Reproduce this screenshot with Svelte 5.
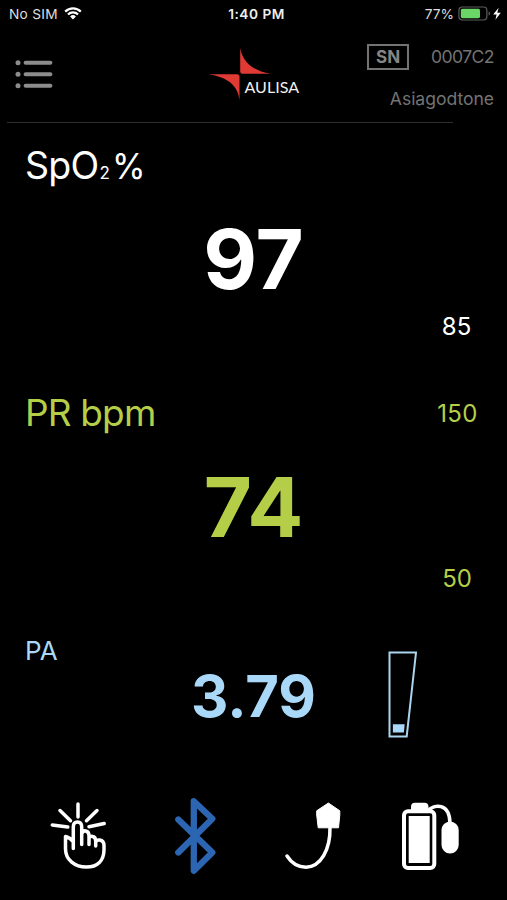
<script>
    let device = { serial: '0007C2', name: 'Asiagodtone' }
    let spo2 = { value: 97, low: 85 }
    let pulse = { value: 74, high: 150, low: 50 }
    let pa = '3.79'
</script>

<main class="monitor">
    <div class="status-bar">
        <div class="carrier">
            <span class="carrier-name">No SIM</span>
            <svg class="wifi" viewBox="0 0 18 13" width="18" height="13">
                <path d="M1.2 4.6a11 11 0 0 1 15.6 0M4 7.4a7 7 0 0 1 10 0" fill="none" stroke="#fff" stroke-width="2.2" />
                <path d="M9 12.4 6.1 9.5a4.1 4.1 0 0 1 5.8 0z" fill="#fff" />
            </svg>
        </div>
        <span class="clock">1:40 PM</span>
        <div class="power">
            <span class="power-level">77%</span>
            <svg viewBox="0 0 44 16" width="44" height="16">
                <rect x="0.9" y="1" width="28" height="13" rx="3.4" fill="none" stroke="#5c5c5c" stroke-width="1.2" />
                <rect x="2.8" y="2.8" width="19.2" height="9.4" rx="1.6" fill="#6bd668" />
                <path d="M30.6 5.3q1.5.8 1.5 2.2t-1.5 2.2z" fill="#5c5c5c" />
                <path d="M40.6 1.8 35.2 8.6h3.4l-1.2 5.2 5.4-7h-3.5z" fill="#fff" />
            </svg>
        </div>
    </div>

    <header class="header">
        <button class="menu" aria-label="Menu">
            <svg viewBox="0 0 38 30" width="38" height="30">
                <g fill="#8c8c8c">
                    <circle cx="3" cy="3.8" r="2.5" />
                    <circle cx="3" cy="15.3" r="2.5" />
                    <circle cx="3" cy="26.8" r="2.5" />
                </g>
                <path d="M10.6 3.8h24.8M10.6 15.3h24.8M10.6 26.8h24.8" stroke="#8c8c8c" stroke-width="4" stroke-linecap="round" />
            </svg>
        </button>
        <svg class="logo" viewBox="0 0 92 54" width="92" height="54">
            <path d="M31.2 1C33 12.500 41.500 23.500 61.500 26.800H33.400q-2.200 0-2.200-2.200z" fill="#e03a34" />
            <path d="M-1 27.300H28q2.500 0 2.500 2.500V53C29 39 19 30 -1 27.300z" fill="#e03a34" />
            <text x="35.500" y="46.300" textLength="54.500" lengthAdjust="spacingAndGlyphs">AULISA</text>
        </svg>
        <div class="device">
            <div class="device-row">
                <span class="sn">SN</span>
                <span class="serial">{device.serial}</span>
            </div>
            <span class="device-name">{device.name}</span>
        </div>
    </header>

    <section class="reading">
        <div class="reading-head">
            <h2 class="spo2-label">SpO<small>2</small><span>%</span></h2>
        </div>
        <div class="value">{spo2.value}</div>
        <div class="limit">{spo2.low}</div>
    </section>

    <section class="reading pulse">
        <div class="reading-head">
            <h2 class="pulse-label">PR bpm</h2>
            <div class="limit limit-high">{pulse.high}</div>
        </div>
        <div class="value">{pulse.value}</div>
        <div class="limit">{pulse.low}</div>
    </section>

    <section class="pa">
        <h2>PA</h2>
        <div class="pa-value">{pa}</div>
        <svg class="gauge" viewBox="0 0 30 88" width="30" height="88">
            <path d="M1.500 1.600H28L18.700 85.400H1.500z" fill="none" stroke="#a9d5ef" stroke-width="2" />
            <path d="M4.900 73.300H16.700L15.900 81.600H4.900z" fill="#a9d8f8" />
        </svg>
    </section>

    <footer class="toolbar">
        <svg viewBox="0 0 90 90" width="90" height="90">
            <g fill="none" stroke="#fff" stroke-width="3.500" stroke-linecap="round" stroke-linejoin="round">
                <path d="M38 14v13M20 20.500l10.500 10.200M12.300 35l15.500 2M46.500 30.700 57 20.500M49 36.700 64.200 33.500" />
                <path d="M33.300 58.500V37q0-5 4.200-5t4.200 5v17.500M41.700 44q1-3.700 4-3 3.300.7 3.300 4.800v8.700M49 48q1.300-2.300 3.800-1.500 2.900.8 2.900 4.500v5M55.700 52q1.200-2.500 4-2 4.300.8 4.300 5.500v4c0 11-6.500 17.600-17.700 17.600S25.500 70 25.500 59V46.500q5.200 1.500 7.500 5" />
            </g>
        </svg>
        <svg viewBox="0 0 70 90" width="70" height="90">
            <path d="M18.300 29.500 52.300 62.500 33.800 80.800V11.200L52.300 28.700 18.300 62.500" fill="none" stroke="#2c65b1" stroke-width="6.300" stroke-linecap="round" stroke-linejoin="round" />
        </svg>
        <svg viewBox="0 0 80 90" width="80" height="90">
            <path d="M53.400 13 64.800 20.800V25L63.500 37.800H43.200L41.700 25V20.800z" fill="#fff" stroke="#fff" stroke-width="1" stroke-linejoin="round" />
            <path d="M55 37C55.500 60 45.500 77.200 31 77.200 23.500 77.200 16.500 73 12 66" fill="none" stroke="#fff" stroke-width="3.500" stroke-linecap="round" />
        </svg>
        <svg viewBox="0 0 80 90" width="80" height="90">
            <rect x="21" y="12.700" width="17.500" height="12" rx="4" fill="#fff" />
            <path d="M38 20.500C44 14.500 59.500 12 60 33" fill="none" stroke="#fff" stroke-width="3.600" />
            <rect x="14" y="21.200" width="30.300" height="56.800" rx="4" fill="#000" stroke="#fff" stroke-width="4" />
            <rect x="18.700" y="26" width="21" height="47" fill="#fff" />
            <rect x="51.500" y="31.500" width="17.200" height="32" rx="8.600" fill="#fff" />
        </svg>
    </footer>
</main>

<style>
:global(body) {
    margin: 0;
    background: #000;
}

.monitor {
    width: 507px;
    height: 900px;
    overflow: hidden;
    background: #000;
    color: #fff;
    font-family: Inter, "Liberation Sans", sans-serif;
}

h2 {
    margin: 0;
    font-weight: 400;
}

.status-bar {
    display: grid;
    grid-template-columns: 1fr auto 1fr;
    align-items: center;
    height: 28px;
    padding: 0 5px 0 9px;
    box-sizing: border-box;
    font-size: 13.7px;
}

.carrier,
.power {
    display: flex;
    align-items: center;
}

.carrier-name {
    color: #ddd;
    letter-spacing: 0.3px;
}

.wifi {
    margin: -1px 0 0 6px;
}

.clock {
    padding-left: 2px;
    color: #eee;
    font-weight: 600;
    letter-spacing: 0.5px;
}

.power {
    justify-content: flex-end;
}

.power-level {
    margin-right: 4px;
    color: #ddd;
}

.header {
    display: flex;
    align-items: flex-start;
    width: 487px;
    height: 95px;
    margin-left: 7px;
    background: linear-gradient(#303030, #303030) left bottom / 446px 1.500px no-repeat;
}

.menu {
    margin: 31px 0 0 8px;
    padding: 0;
    border: 0;
    background: none;
    line-height: 0;
}

.logo {
    margin: 19px 0 0 156px;
    overflow: visible;
}

.logo text {
    fill: #f0f0f0;
    font-family: Lato, sans-serif;
    font-size: 14.500px;
}

.device {
    display: flex;
    flex: 1;
    flex-direction: column;
    align-items: flex-end;
    padding-top: 15px;
    color: #737373;
    font-size: 17.6px;
}

.device-row {
    display: flex;
    align-items: center;
    gap: 22px;
    height: 27px;
}

.sn {
    width: 42px;
    height: 26px;
    box-sizing: border-box;
    border: 2px solid #737373;
    color: #858585;
    font-size: 17px;
    font-weight: 700;
    line-height: 22px;
    text-align: center;
}

.serial {
    letter-spacing: -0.6px;
}

.device-name {
    margin-top: 14px;
    letter-spacing: -0.05px;
    line-height: 30px;
}

.reading {
    height: 248px;
}

.reading-head {
    display: flex;
    align-items: center;
    justify-content: space-between;
    height: 84px;
    padding-left: 25px;
}

.spo2-label {
    padding-top: 8px;
    font-size: 37.500px;
    letter-spacing: -0.7px;
    line-height: 46px;
}

.spo2-label small {
    margin-left: 1px;
    font-size: 17px;
}

.spo2-label span {
    display: inline-block;
    margin-left: 3px;
    font-size: 36px;
    letter-spacing: 0;
    transform: scaleX(0.95);
    transform-origin: left;
}

.pulse-label {
    font-size: 37px;
    letter-spacing: -0.85px;
    line-height: 46px;
}

.value {
    font-size: 83px;
    font-weight: 700;
    line-height: 104px;
    text-align: center;
}

.limit {
    width: 101px;
    margin-left: auto;
    font-size: 24px;
    line-height: 31px;
    text-align: center;
}

.pulse {
    height: 227px;
    color: #b4cf47;
}

.pulse > .limit {
    width: 100px;
    line-height: 39px;
}

.limit-high {
    width: 99px;
    letter-spacing: 0.3px;
}

.pa {
    display: grid;
    grid-template-columns: 166px 175px 1fr;
    height: 192px;
    color: #a9d8f8;
}

.pa h2 {
    padding: 37px 0 0 25px;
    font-size: 26px;
    line-height: 32px;
}

.pa-value {
    padding-top: 66px;
    font-size: 58px;
    font-weight: 700;
    line-height: 64px;
    text-align: center;
}

.gauge {
    margin: 53px 0 0 47px;
}

.toolbar {
    display: flex;
    padding-left: 40px;
}

.toolbar svg:nth-child(2) {
    margin-left: 30px;
}

.toolbar svg:nth-child(3) {
    margin-left: 45px;
}

.toolbar svg:nth-child(4) {
    margin-left: 35px;
}
</style>
